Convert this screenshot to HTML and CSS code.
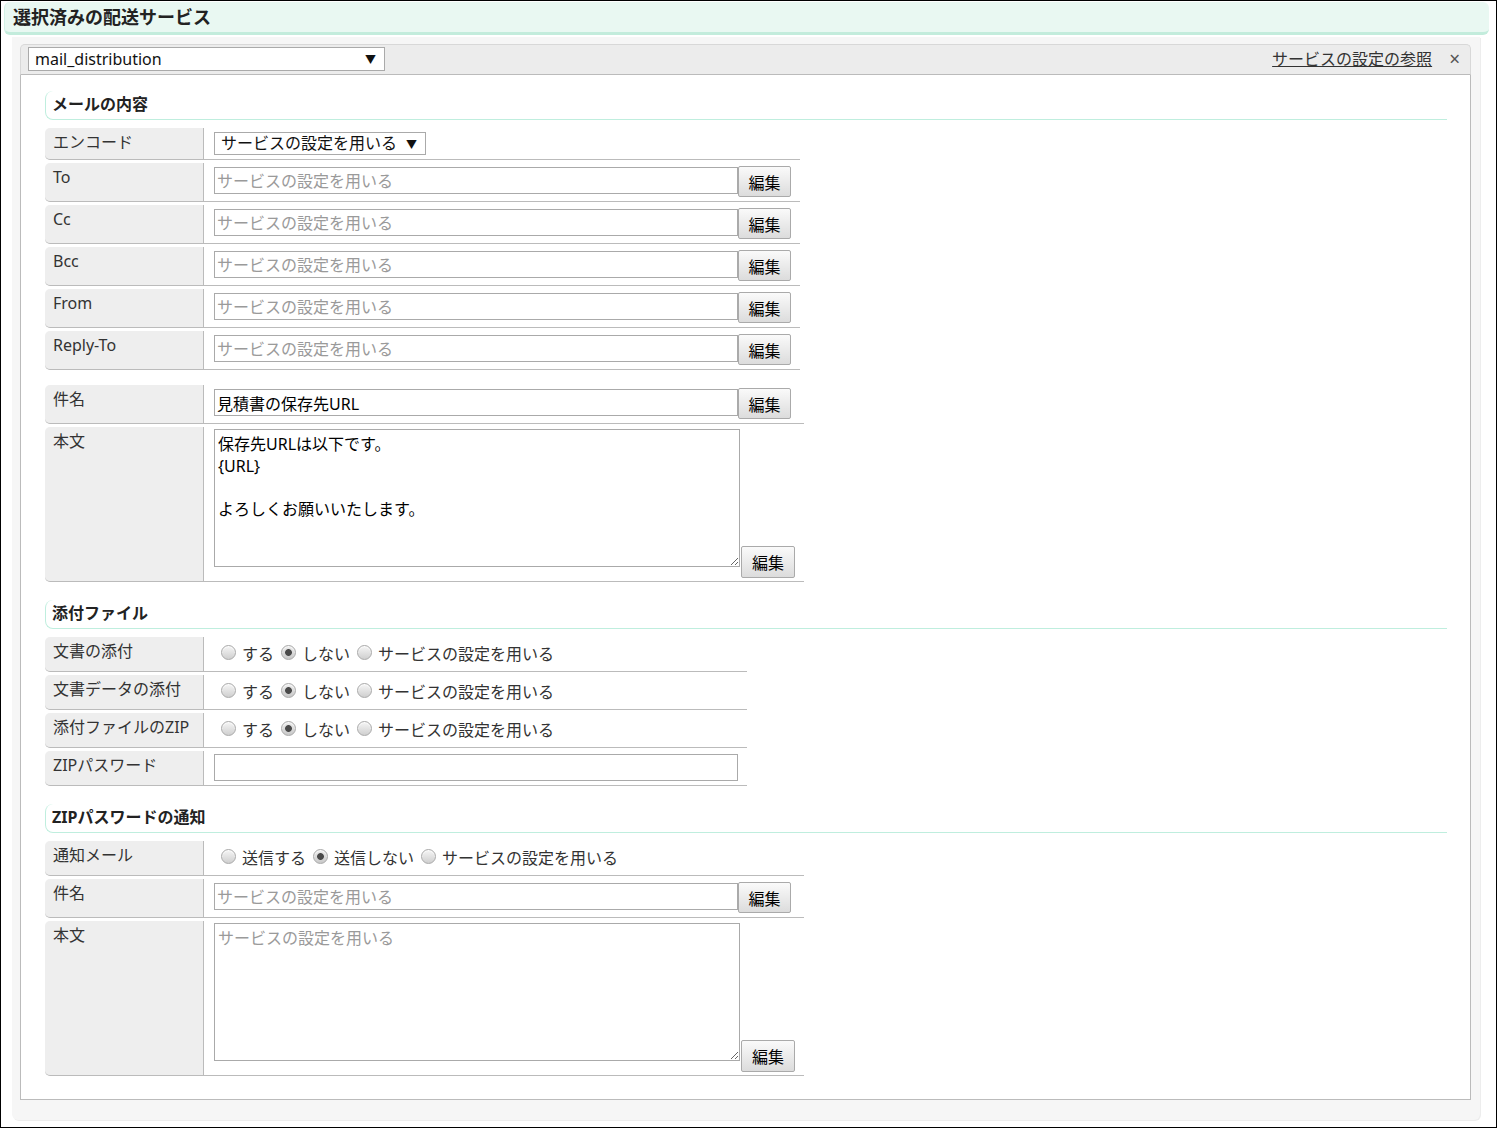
FILE: index.html
```html
<!DOCTYPE html>
<html lang="ja">
<head>
<meta charset="utf-8">
<title>選択済みの配送サービス</title>
<link rel="stylesheet" href="styles.css">
</head>
<body>
<div class="frame">
  <div class="page-head">選択済みの配送サービス</div>
  <div class="panel">
    <div class="box">
      <div class="box-tab">
        <span class="sel sel-service"><select><option>mail_distribution</option></select></span>
        <a class="ref-link" href="#">サービスの設定の参照</a>
        <span class="close">×</span>
      </div>
      <div class="box-body">
        <h3 class="sec-title sec-first">メールの内容</h3>
        <table class="form">
          <tr><th>エンコード</th><td class="v-sel"><span class="sel sel-enc"><select><option>サービスの設定を用いる</option></select></span></td></tr>
          <tr><th>To</th><td class="v-input"><div class="field"><input type="text" placeholder="サービスの設定を用いる"><button type="button">編集</button></div></td></tr>
          <tr><th>Cc</th><td class="v-input"><div class="field"><input type="text" placeholder="サービスの設定を用いる"><button type="button">編集</button></div></td></tr>
          <tr><th>Bcc</th><td class="v-input"><div class="field"><input type="text" placeholder="サービスの設定を用いる"><button type="button">編集</button></div></td></tr>
          <tr><th>From</th><td class="v-input"><div class="field"><input type="text" placeholder="サービスの設定を用いる"><button type="button">編集</button></div></td></tr>
          <tr><th>Reply-To</th><td class="v-input"><div class="field"><input type="text" placeholder="サービスの設定を用いる"><button type="button">編集</button></div></td></tr>
        </table>
        <table class="form form-gap">
          <tr><th>件名</th><td class="v-input"><div class="field"><input type="text" value="見積書の保存先URL"><button type="button">編集</button></div></td></tr>
          <tr><th>本文</th><td class="v-area"><div class="field area"><textarea>保存先URLは以下です。
{URL}

よろしくお願いいたします。</textarea><button type="button">編集</button></div></td></tr>
        </table>

        <h3 class="sec-title sec-next">添付ファイル</h3>
        <table class="form">
          <tr><th>文書の添付</th><td class="v-radio"><div class="radios"><input type="radio" name="r1"><span>する</span><input type="radio" name="r1" checked><span>しない</span><input type="radio" name="r1"><span>サービスの設定を用いる</span></div></td></tr>
          <tr><th>文書データの添付</th><td class="v-radio"><div class="radios"><input type="radio" name="r2"><span>する</span><input type="radio" name="r2" checked><span>しない</span><input type="radio" name="r2"><span>サービスの設定を用いる</span></div></td></tr>
          <tr><th>添付ファイルのZIP</th><td class="v-radio"><div class="radios"><input type="radio" name="r3"><span>する</span><input type="radio" name="r3" checked><span>しない</span><input type="radio" name="r3"><span>サービスの設定を用いる</span></div></td></tr>
          <tr><th>ZIPパスワード</th><td class="v-pw"><input type="text" class="pw"></td></tr>
        </table>

        <h3 class="sec-title sec-next">ZIPパスワードの通知</h3>
        <table class="form">
          <tr><th>通知メール</th><td class="v-radio"><div class="radios"><input type="radio" name="r4"><span>送信する</span><input type="radio" name="r4" checked><span>送信しない</span><input type="radio" name="r4"><span>サービスの設定を用いる</span></div></td></tr>
          <tr><th>件名</th><td class="v-input"><div class="field"><input type="text" placeholder="サービスの設定を用いる"><button type="button">編集</button></div></td></tr>
          <tr><th>本文</th><td class="v-area"><div class="field area"><textarea placeholder="サービスの設定を用いる"></textarea><button type="button">編集</button></div></td></tr>
        </table>
      </div>
    </div>
  </div>
</div>
</body>
</html>
```

FILE: styles.css
```css
* { box-sizing: border-box; }

body {
  margin: 0;
  font-family: "Noto Sans", "Noto Sans CJK JP", sans-serif;
  font-size: 16px;
  color: #333;
}

.frame {
  width: 1497px;
  height: 1128px;
  border: 1px solid #000;
  background: #fff;
  overflow: hidden;
}

.page-head {
  margin: 1px 7px 0 3px;
  height: 33px;
  padding-left: 8px;
  background: #e9f8f2;
  border-left: 1px solid #d3f2e6;
  border-bottom: 3px solid #c3ecdc;
  border-radius: 6px;
  font-weight: bold;
  font-size: 18px;
  line-height: 30px;
  color: #222;
}

.panel {
  margin: 2px 16px 0 11px;
  padding: 7px 9px 20px 8px;
  background: #f6f6f6;
  border-radius: 0 0 6px 6px;
  box-shadow: 1px 1px 0 #ededed;
}

.box-tab {
  display: flex;
  align-items: center;
  height: 31px;
  padding: 2px 10px 3px 7px;
  background: #ececec;
  border: 1px solid #d8d8d8;
  border-bottom-color: #bbb;
  border-radius: 5px 5px 0 0;
}

.sel {
  position: relative;
  display: inline-block;
}
.sel select {
  -webkit-appearance: none;
  appearance: none;
  display: block;
  border: 1px solid #aaa;
  border-radius: 0;
  background: #fff;
  font-family: "Noto Sans", "Noto Sans CJK JP", sans-serif;
  font-size: 16px;
  color: #111;
  padding: 0 0 0 6px;
  margin: 0;
}
.sel::after {
  content: "▼";
  position: absolute;
  right: 9px;
  top: 50%;
  transform: translateY(-50%);
  font-size: 11px;
  color: #111;
  pointer-events: none;
}
.sel-service select { width: 357px; height: 24px; line-height: 22px; }
.sel-enc select { width: 212px; height: 23px; line-height: 21px; }

.ref-link {
  margin-left: auto;
  color: #333;
  text-decoration: underline;
  font-size: 16px;
  line-height: 22px;
}
.close {
  margin-left: 17px;
  font-size: 19px;
  color: #555;
  line-height: 22px;
}

.box-body {
  background: #fff;
  border: 1px solid #bbb;
  border-top: none;
  padding: 16px 23px 20px 24px;
}

.sec-title {
  margin: 0;
  height: 29px;
  padding-left: 6px;
  border-left: 1px solid #bfeede;
  border-bottom: 1px solid #bfeede;
  border-radius: 8px 0 0 8px;
  font-size: 16px;
  font-weight: bold;
  line-height: 26px;
  color: #222;
}
.sec-next { margin-top: 15px; }

.form {
  border-collapse: separate;
  border-spacing: 0 3px;
  margin-top: 5px;
}
.form-gap { margin-top: 9px; }

.form th {
  width: 150px;
  box-sizing: content-box;
  padding: 3px 0 3px 8px;
  text-align: left;
  vertical-align: top;
  font-weight: normal;
  line-height: 22px;
  color: #333;
  background: #eee;
  border-right: 1px solid #bbb;
  border-bottom: 1px solid #bbb;
  border-radius: 5px 0 0 5px;
  white-space: nowrap;
}
.form td {
  border-bottom: 1px solid #bbb;
  vertical-align: top;
}

.v-sel { padding: 4px 9px 4px 10px; }
.v-input { padding: 3px 9px 4px 10px; }
.v-area { padding: 2px 9px 3px 10px; }
.v-radio { padding: 5px 9px 5px 10px; }
.v-pw { padding: 3px 9px 4px 10px; }

.field {
  display: flex;
  align-items: flex-start;
}
.field input,
.pw {
  display: block;
  width: 524px;
  height: 27px;
  margin: 1px 0 0 0;
  padding: 0 2px;
  border: 1px solid #aaa;
  border-radius: 0;
  font-family: "Noto Sans", "Noto Sans CJK JP", sans-serif;
  font-size: 16px;
  color: #000;
  background: #fff;
}
.pw { margin: 0; }
input::placeholder,
textarea::placeholder { color: #9a9a9a; }

.field button {
  width: 53px;
  height: 31px;
  margin: 0;
  padding: 0;
  border: 1px solid #aaa;
  border-radius: 2px;
  background: linear-gradient(#fafafa, #dcdcdc);
  font-family: "Noto Sans", "Noto Sans CJK JP", sans-serif;
  font-size: 16px;
  color: #000;
}

.area { align-items: flex-end; }
.area textarea {
  display: block;
  width: 526px;
  height: 138px;
  margin: 0 0 11px 0;
  padding: 4px 3px 3px;
  border: 1px solid #aaa;
  border-radius: 0;
  font-family: "Noto Sans", "Noto Sans CJK JP", sans-serif;
  font-size: 16px;
  line-height: 21.5px;
  color: #000;
}
.area button {
  width: 54px;
  height: 32px;
  margin-left: 1px;
}

.radios {
  display: flex;
  align-items: center;
  line-height: 24px;
  color: #333;
  white-space: nowrap;
}
.radios input {
  -webkit-appearance: none;
  appearance: none;
  flex: none;
  width: 15px;
  height: 15px;
  margin: 0 6px 3px 7px;
  border: 1px solid #a9a9a9;
  border-radius: 50%;
  background: linear-gradient(#f6f6f6, #cfcfcf);
  box-shadow: inset 0 1px 1px rgba(255,255,255,0.8);
}
.radios input:checked {
  background: radial-gradient(circle, #4a4a4a 0, #4a4a4a 3px, transparent 3.8px), linear-gradient(#eeeeee, #c8c8c8);
}
```
